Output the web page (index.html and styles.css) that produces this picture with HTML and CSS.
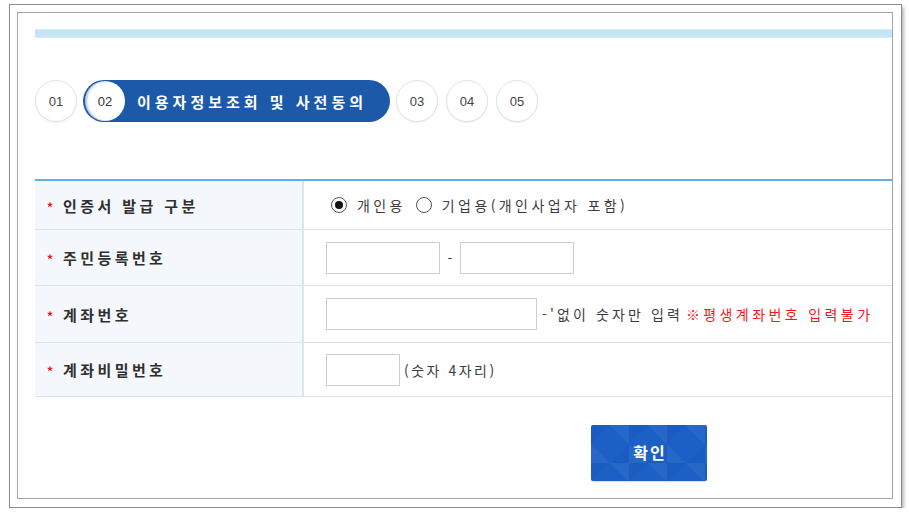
FILE: index.html
```html
<!DOCTYPE html>
<html lang="ko">
<head>
<meta charset="utf-8">
<title>이용자정보조회 및 사전동의</title>
<link rel="stylesheet" href="styles.css">
</head>
<body>
<div class="frame">
  <div class="panel">
    <div class="topbar"></div>

    <div class="steps">
      <div class="step">01</div>
      <div class="step-active">
        <span class="step-num">02</span>
        <span class="step-title">이용자정보조회 및 사전동의</span>
      </div>
      <div class="step">03</div>
      <div class="step">04</div>
      <div class="step">05</div>
    </div>

    <div class="form">
      <div class="row row1">
        <div class="label"><span class="req">*</span>인증서 발급 구분</div>
        <div class="value">
          <span class="radio checked"></span><span class="opt">개인용</span>
          <span class="radio"></span><span class="opt2">기업용(개인사업자 포함)</span>
        </div>
      </div>
      <div class="row row2">
        <div class="label"><span class="req">*</span>주민등록번호</div>
        <div class="value">
          <span class="input w114"></span><span class="dash">-</span><span class="input w114"></span>
        </div>
      </div>
      <div class="row row3">
        <div class="label"><span class="req">*</span>계좌번호</div>
        <div class="value">
          <span class="input w211"></span><span class="note">-'없이 숫자만 입력</span><span class="warn">※평생계좌번호 입력불가</span>
        </div>
      </div>
      <div class="row row4">
        <div class="label"><span class="req">*</span>계좌비밀번호</div>
        <div class="value">
          <span class="input w74"></span><span class="note2">(숫자 4자리)</span>
        </div>
      </div>
    </div>

    <div class="actions">
      <button class="btn" type="button">확인</button>
    </div>
  </div>
</div>
</body>
</html>
```

FILE: styles.css
```css
* { box-sizing: border-box; }

html, body {
  margin: 0;
  padding: 0;
  background: #ffffff;
}

body {
  font-family: "Noto Sans CJK KR", "Noto Sans", sans-serif;
  color: #333;
}

.frame {
  margin: 4px 0 0 9px;
  width: 893px;
  height: 504px;
  border: 1px solid #8c8c8c;
  background: #fff;
  padding: 7px 8px 8px 7px;
  box-shadow: 2px 3px 3px rgba(0, 0, 0, 0.28);
}

.panel {
  width: 876px;
  height: 487px;
  border: 1px solid #a4a4a4;
  background: #fff;
  padding: 16px 0 0 17px;
}

.topbar {
  height: 9px;
  background: #c3e5f6;
  border-top: 1px solid #d6eefa;
  border-bottom: 1px solid #d6eefa;
}

/* steps */
.steps {
  display: flex;
  gap: 8px;
  margin-top: 42px;
  height: 42px;
}

.step {
  width: 42px;
  height: 42px;
  border-radius: 50%;
  border: 1px solid #e2e2e2;
  background: #fff;
  display: flex;
  align-items: center;
  justify-content: center;
  font-family: "Liberation Sans", Arial, sans-serif;
  font-size: 13px;
  color: #444;
  box-shadow: 0 1px 1px rgba(0, 0, 0, 0.06);
}

.step-active {
  margin: 0 -2px;
  width: 307px;
  height: 42px;
  border-radius: 21px;
  background: #1c59a9;
  display: flex;
  align-items: center;
  padding-left: 2px;
}

.step-num {
  width: 40px;
  height: 40px;
  border-radius: 50%;
  background: #fff;
  display: flex;
  align-items: center;
  justify-content: center;
  font-family: "Liberation Sans", Arial, sans-serif;
  font-size: 13px;
  color: #333;
  box-shadow: inset 2px 0 2px rgba(28, 89, 169, 0.35);
}

.step-title {
  margin-left: 12px;
  color: #fff;
  font-weight: bold;
  font-size: 15px;
  letter-spacing: 4px;
  line-height: 1;
}

/* form */
.form {
  margin-top: 57px;
  width: 857px;
  border-top: 2px solid #5eb0e6;
}

.row {
  display: flex;
  border-bottom: 1px solid #d8e3ef;
}

.row1 { height: 49px; }
.row2 { height: 56px; }
.row3 { height: 57px; }
.row4 { height: 54px; }

.label {
  width: 269px;
  flex: none;
  background: #f4f7fb;
  border-right: 2px solid #dce6f1;
  display: flex;
  align-items: center;
  padding-left: 12px;
  font-size: 15px;
  font-weight: bold;
  letter-spacing: 3.4px;
  color: #2f2f2f;
}

.req {
  color: #f01010;
  font-size: 12px;
  font-weight: bold;
  letter-spacing: 0;
  margin-right: 10px;
  position: relative;
  top: 1px;
}

.value {
  flex: 1;
  display: flex;
  align-items: center;
  padding-left: 22px;
  font-size: 14px;
  letter-spacing: 3px;
  color: #3c3c3c;
}

.radio {
  width: 16px;
  height: 16px;
  border: 1px solid #555;
  border-radius: 50%;
  background: #fff;
  display: inline-flex;
  align-items: center;
  justify-content: center;
  flex: none;
}

.radio.checked { margin-left: 5px; }

.radio.checked::after {
  content: "";
  width: 8px;
  height: 8px;
  border-radius: 50%;
  background: #111;
}

.opt { margin-left: 10px; margin-right: 10px; letter-spacing: 3.4px; }
.opt2 { margin-left: 10px; letter-spacing: 3.4px; }

.input {
  height: 32px;
  border: 1px solid #cfcfcf;
  background: #fff;
  flex: none;
}

.w114 { width: 114px; }
.w211 { width: 211px; }
.w74 { width: 74px; }

.dash {
  width: 20px;
  text-align: center;
  letter-spacing: 0;
}

.note { margin-left: 5px; letter-spacing: 3.1px; }
.warn { margin-left: 3px; color: #f21818; letter-spacing: 3.4px; }
.note2 { margin-left: 4px; letter-spacing: 2.5px; }

/* button */
.actions {
  margin-top: 28px;
  padding-left: 556px;
}

.btn {
  width: 116px;
  height: 56px;
  border: none;
  border-radius: 2px;
  background-color: #1c60c6;
  background-image:
    linear-gradient(45deg, rgba(255,255,255,0.045) 25%, transparent 25%, transparent 75%, rgba(255,255,255,0.045) 75%),
    linear-gradient(-45deg, rgba(0,0,60,0.04) 25%, transparent 25%, transparent 75%, rgba(0,0,60,0.04) 75%);
  background-size: 38px 38px;
  color: #fff;
  font-family: "Noto Sans CJK KR", sans-serif;
  font-size: 16px;
  font-weight: bold;
  letter-spacing: 2px;
  padding: 0 0 2px 2px;
  box-shadow: 0 1px 1px rgba(0, 0, 0, 0.15);
}
```
